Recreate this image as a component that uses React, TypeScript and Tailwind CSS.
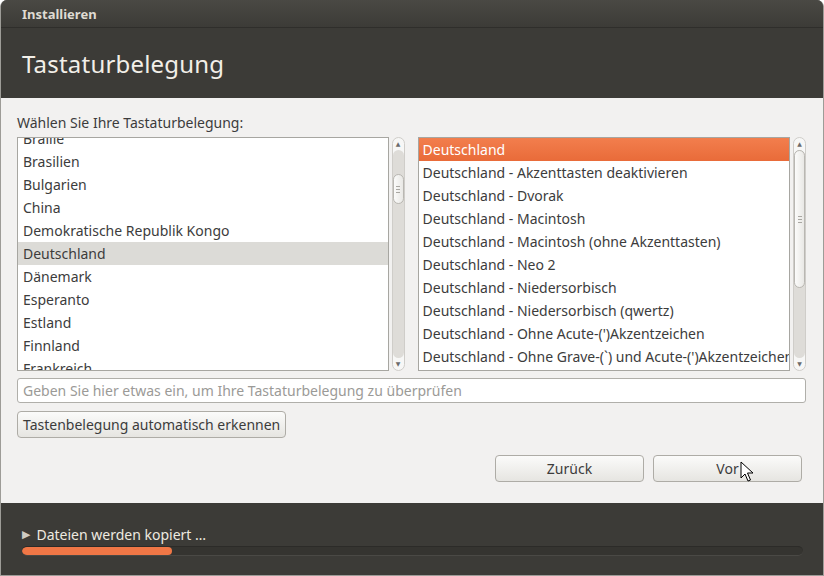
import React from 'react';

const leftItems = ['Braille', 'Brasilien', 'Bulgarien', 'China', 'Demokratische Republik Kongo', 'Deutschland', 'Dänemark', 'Esperanto', 'Estland', 'Finnland', 'Frankreich'];

const rightItems = [
    'Deutschland',
    'Deutschland - Akzenttasten deaktivieren',
    'Deutschland - Dvorak',
    'Deutschland - Macintosh',
    'Deutschland - Macintosh (ohne Akzenttasten)',
    'Deutschland - Neo 2',
    'Deutschland - Niedersorbisch',
    'Deutschland - Niedersorbisch (qwertz)',
    "Deutschland - Ohne Acute-(')Akzentzeichen",
    "Deutschland - Ohne Grave-(`) und Acute-(')Akzentzeichen",
];

function Scrollbar({ thumbTop, thumbHeight }: { thumbTop: number; thumbHeight: number }) {
    return (
        <div className="w-[13px] h-full rounded-full border border-[#cfcdc9] bg-[#f7f7f6] flex flex-col items-center">
            <div className="h-[12px] flex items-center justify-center text-[6px] text-[#6b6b6b] leading-none">▲</div>
            <div className="flex-1 w-[11px] rounded-full bg-[#dedcd8] relative">
                <div className="absolute left-0 w-[11px] rounded-full border border-[#b9b7b2] bg-gradient-to-r from-[#fbfbfa] to-[#e9e8e5] flex flex-col items-center justify-center gap-[2px]" style={{ top: thumbTop, height: thumbHeight }}>
                    <div className="w-[4px] h-px bg-[#a9a7a2]" />
                    <div className="w-[4px] h-px bg-[#a9a7a2]" />
                    <div className="w-[4px] h-px bg-[#a9a7a2]" />
                </div>
            </div>
            <div className="h-[12px] flex items-center justify-center text-[6px] text-[#6b6b6b] leading-none">▼</div>
        </div>
    );
}

export default function App() {
    return (
        <div className="w-[824px] h-[576px] bg-[#3c3b37] rounded-t-[7px] border-x border-b border-[#9d9c97] flex flex-col overflow-hidden relative" style={{ fontFamily: '"Noto Sans", "DejaVu Sans", sans-serif' }}>
            <div className="h-[28px] shrink-0 flex items-center pl-[21px] pt-[3px] border-b border-[#2f2e2b] bg-gradient-to-b from-[#4a4944] to-[#3c3b37]">
                <span className="text-[13px] font-bold text-[#dfdbd2]">Installieren</span>
            </div>
            <div className="h-[70px] shrink-0 flex items-center pl-[21px] pt-[2px]">
                <span className="text-[24px] text-[#f2efe8] tracking-[0.2px]">Tastaturbelegung</span>
            </div>

            <div className="flex-1 bg-[#f2f1f0] px-[16px] pt-[15px] flex flex-col text-[14px] text-[#3c3c3c]">
                <div className="h-[24px] leading-[20px]">Wählen Sie Ihre Tastaturbelegung:</div>
                <div className="h-[234px] flex">
                    <div className="w-[373px] h-full border border-[#a7a6a1] bg-white overflow-hidden">
                        <div className="-mt-[11px]">
                            {leftItems.map((it) => (
                                <div key={it} className={`h-[23px] leading-[23px] px-[5px] ${it === 'Deutschland' ? 'bg-[#dcdbd7]' : ''}`}>{it}</div>
                            ))}
                        </div>
                    </div>
                    <div className="ml-[3px] w-[14px] h-full">
                        <Scrollbar thumbTop={24} thumbHeight={30} />
                    </div>
                    <div className="ml-[12px] w-[374px] h-full border border-[#a7a6a1] bg-white overflow-hidden">
                        {rightItems.map((it, i) => (
                            <div key={it} className={`h-[23px] leading-[23px] px-[4px] whitespace-nowrap ${i === 0 ? 'bg-gradient-to-b from-[#f27e4d] to-[#e96b39] text-white' : ''}`}>{it}</div>
                        ))}
                    </div>
                    <div className="ml-[3px] w-[14px] h-full">
                        <Scrollbar thumbTop={0} thumbHeight={138} />
                    </div>
                </div>

                <div className="mt-[7px] w-[789px] h-[25px] border border-[#b0afaa] rounded-[3px] bg-white flex items-center px-[5px] text-[#9b9a97]">
                    Geben Sie hier etwas ein, um Ihre Tastaturbelegung zu überprüfen
                </div>

                <div className="mt-[8px]">
                    <button className="h-[27px] px-[5px] border border-[#aeaca6] rounded-[4px] bg-gradient-to-b from-[#fbfbfa] to-[#e6e5e1] text-[14px] text-[#3c3c3c]">
                        Tastenbelegung automatisch erkennen
                    </button>
                </div>

                <div className="mt-[17px] flex justify-end gap-[9px] pr-[5px]">
                    <button className="w-[149px] h-[27px] border border-[#aeaca6] rounded-[4px] bg-gradient-to-b from-[#fbfbfa] to-[#e6e5e1] text-[#3c3c3c]">Zurück</button>
                    <button className="w-[149px] h-[27px] border border-[#aeaca6] rounded-[4px] bg-gradient-to-b from-[#fbfbfa] to-[#e6e5e1] text-[#3c3c3c]">Vor</button>
                </div>
            </div>

            <div className="h-[72px] shrink-0 px-[21px] pt-[22px]">
                <div className="flex items-center gap-[6px] text-[14px] text-[#eeeae0] h-[18px]">
                    <span className="text-[11px] text-[#cfcbc2]">▶</span>
                    <span>Dateien werden kopiert …</span>
                </div>
                <div className="mt-[3px] w-[781px] h-[10px] rounded-full bg-[#353430] border-t border-[#2c2b28] border-b border-b-[#4a4945] overflow-hidden">
                    <div className="h-full w-[150px] rounded-full bg-[#f07746]" />
                </div>
            </div>

            <svg className="absolute left-[739px] top-[461px]" width="14" height="22" viewBox="0 0 14 22">
                <path d="M1 1 L1 17 L5 13 L8 20 L10.5 19 L7.5 12 L13 12 Z" fill="white" stroke="black" strokeWidth="1" strokeLinejoin="round" />
            </svg>
        </div>
    );
}
